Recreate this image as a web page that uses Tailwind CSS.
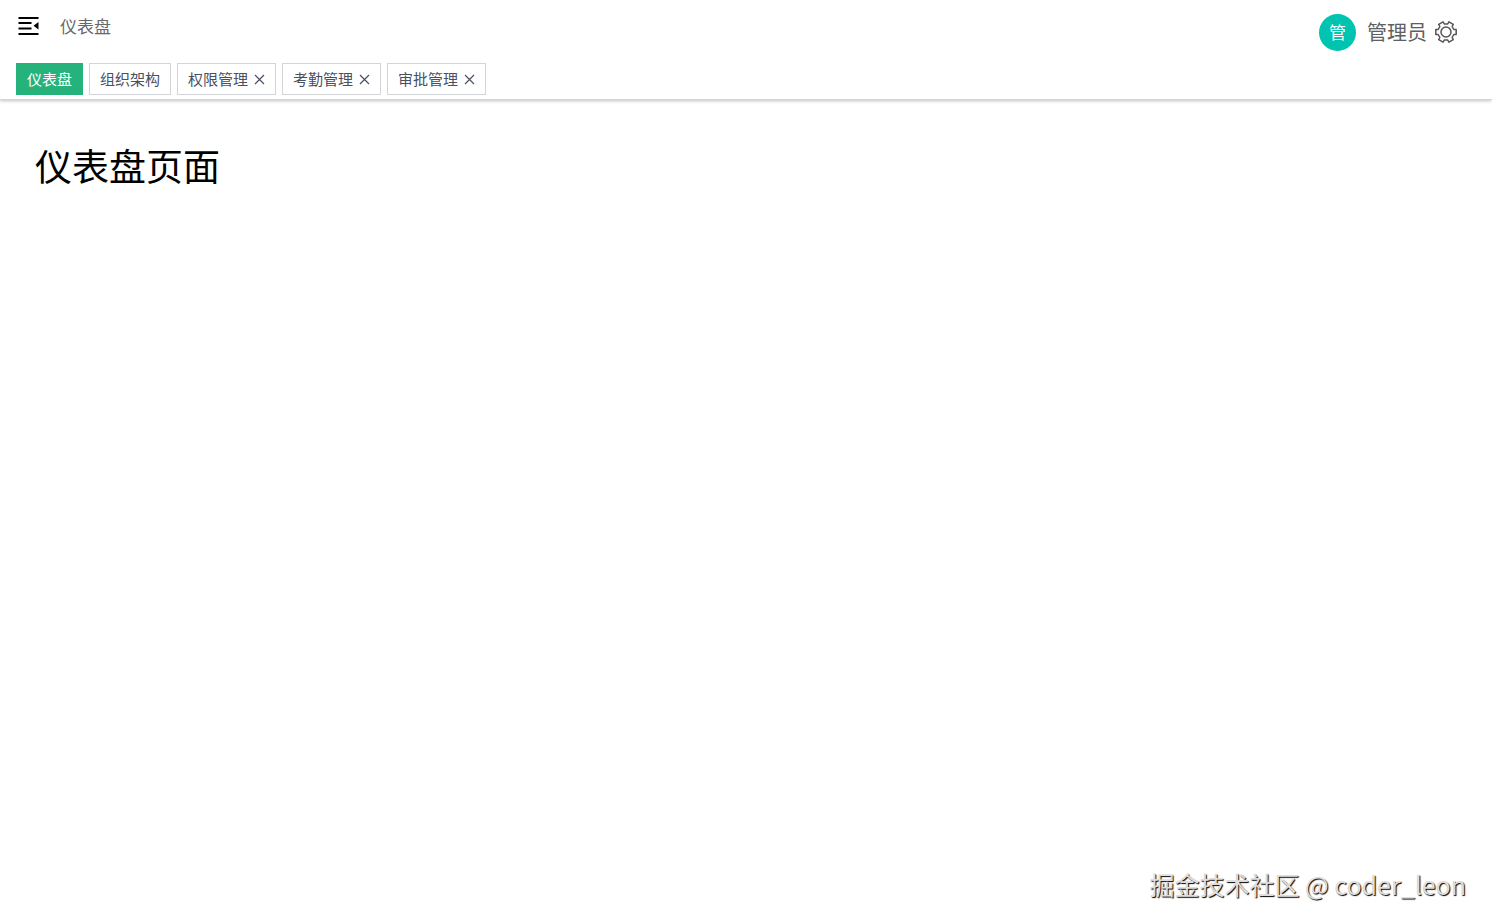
<!DOCTYPE html>
<html lang="zh-CN">

<head>
    <meta charset="UTF-8">
    <meta name="viewport" content="width=device-width, initial-scale=1.0">
    <title>仪表盘</title>
    <script src="https://cdn.jsdelivr.net/npm/@tailwindcss/browser@4"></script>
</head>

<body class="min-h-screen flex flex-col bg-white font-['Noto_Sans_CJK_SC',sans-serif]">

    <header class="border-b border-[#d4d4d4] shadow-[0_1px_3px_rgba(0,0,0,0.24)]">
        <div class="flex items-start justify-between">
            <div class="flex items-center gap-[21px] h-[51px] pl-[18px]">
                <button type="button" aria-label="折叠菜单" class="cursor-pointer">
                    <svg class="w-[21px] h-[18px]" viewBox="0 0 21 18" fill="black">
                        <path d="M0.500 0h20v2h-20zM0.500 5h13v2h-13zM0.500 10.500h13v2h-13zM0.500 16h20v2h-20zM20.500 5v7.500L15.500 8.800z" />
                    </svg>
                </button>
                <a href="#" class="text-[#66686b] text-[17px] leading-6">仪表盘</a>
            </div>
            <div class="flex items-center h-[63px] pt-px pr-[34px]">
                <span class="flex items-center justify-center w-[37px] h-[37px] rounded-full bg-[#00c4b0] text-white text-[17px]">管</span>
                <span class="ml-[11px] text-[#606060] text-[20px] leading-7">管理员</span>
                <button type="button" aria-label="设置" class="ml-[7px] cursor-pointer">
                    <svg class="w-6 h-6" viewBox="0 0 24 24" fill="none" stroke="#555" stroke-width="1.5" stroke-linejoin="round">
                        <path d="M19.800 9.500H22.200V14.500H19.800L18.100 17.500L19.300 19.600L14.900 22.100L13.700 20H10.300L9.100 22.100L4.700 19.600L5.900 17.500L4.200 14.500H1.800V9.500H4.200L5.900 6.500L4.700 4.400L9.100 1.900L10.300 4H13.700L14.900 1.900L19.300 4.400L18.100 6.500Z" />
                        <circle cx="12" cy="12" r="5" />
                    </svg>
                </button>
            </div>
        </div>

        <nav class="flex gap-1.5 px-4 pb-1 text-[15px] leading-[30px]">
            <a href="#" aria-current="page" class="px-2.5 border border-[#26b27b] bg-[#26b27b] text-white">仪表盘</a>
            <a href="#" class="px-2.5 border border-[#d3d5d8] text-[#495060]">组织架构</a>
            <div class="flex items-center gap-1.5 px-2.5 border border-[#d3d5d8] text-[#495060]">
                <a href="#">权限管理</a>
                <button type="button" aria-label="关闭权限管理" class="cursor-pointer">
                    <svg class="w-[11px] h-[11px]" viewBox="0 0 11 11" fill="none" stroke="currentColor" stroke-width="1.2">
                        <path d="M1 1l9 9M10 1l-9 9" />
                    </svg>
                </button>
            </div>
            <div class="flex items-center gap-1.5 px-2.5 border border-[#d3d5d8] text-[#495060]">
                <a href="#">考勤管理</a>
                <button type="button" aria-label="关闭考勤管理" class="cursor-pointer">
                    <svg class="w-[11px] h-[11px]" viewBox="0 0 11 11" fill="none" stroke="currentColor" stroke-width="1.2">
                        <path d="M1 1l9 9M10 1l-9 9" />
                    </svg>
                </button>
            </div>
            <div class="flex items-center gap-1.5 px-2.5 border border-[#d3d5d8] text-[#495060]">
                <a href="#">审批管理</a>
                <button type="button" aria-label="关闭审批管理" class="cursor-pointer">
                    <svg class="w-[11px] h-[11px]" viewBox="0 0 11 11" fill="none" stroke="currentColor" stroke-width="1.2">
                        <path d="M1 1l9 9M10 1l-9 9" />
                    </svg>
                </button>
            </div>
        </nav>
    </header>

    <main class="flex-1 px-[35px] pt-10">
        <h1 class="text-[37px] leading-[50px] text-black">仪表盘页面</h1>
    </main>

    <footer class="px-[26px] pb-[22px] text-right text-[25px] leading-9 text-[#dedede] [text-shadow:1px_1px_1px_#000]">掘金技术社区 @ coder_leon</footer>

</body>

</html>
